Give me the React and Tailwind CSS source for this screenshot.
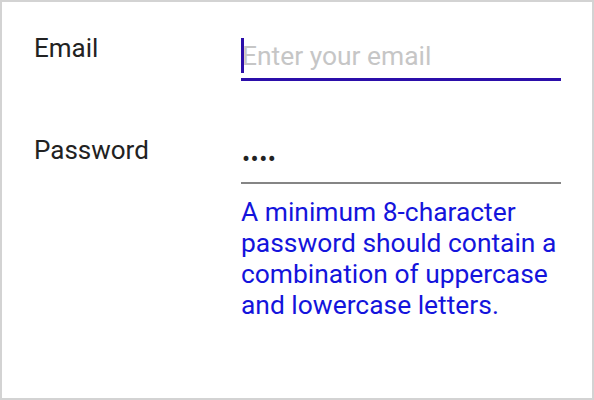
import React from 'react';

const font = { fontFamily: 'Roboto, "Noto Sans", sans-serif' };

export default function App() {
  return (
    <div
      className="w-[594px] h-[400px] border-2 border-[#d3d3d3] bg-white box-border"
      style={font}
    >
      <div className="flex flex-col pl-[32px] pt-[30px]">
        {/* Email */}
        <div className="flex">
          <label className="w-[207px] shrink-0 text-[26px] leading-[32px] text-[#222]">Email</label>
          <div className="relative w-[320px]">
            <input
              type="email"
              placeholder="Enter your email"
              className="block w-full h-[47px] mt-[2px] border-b-[3px] border-[#2b0eaa] outline-none bg-transparent pl-[1px] text-[26.4px] text-[#222] placeholder:text-[#c6c6c6]"
              style={font}
            />
            {/* caret */}
            <span className="absolute left-0 top-[6px] w-[3px] h-[35px] bg-[#2b0eaa]" />
          </div>
        </div>

        {/* Password */}
        <div className="flex mt-[51px]">
          <label className="w-[207px] shrink-0 pt-[2px] text-[26px] leading-[32px] text-[#222]">Password</label>
          <div className="w-[320px]">
            <input
              type="password"
              defaultValue="abcd"
              className="block w-full h-[48px] mt-[4px] border-b-2 border-[#858585] outline-none bg-transparent pl-[1px] text-[24px] text-[#222] tracking-[0.5px]"
              style={font}
            />
            <p className="mt-[13px] text-[26.4px] leading-[31px] text-[#1414dc]">
              A minimum 8-character password should contain a combination of uppercase and lowercase letters.
            </p>
          </div>
        </div>
      </div>
    </div>
  );
}
